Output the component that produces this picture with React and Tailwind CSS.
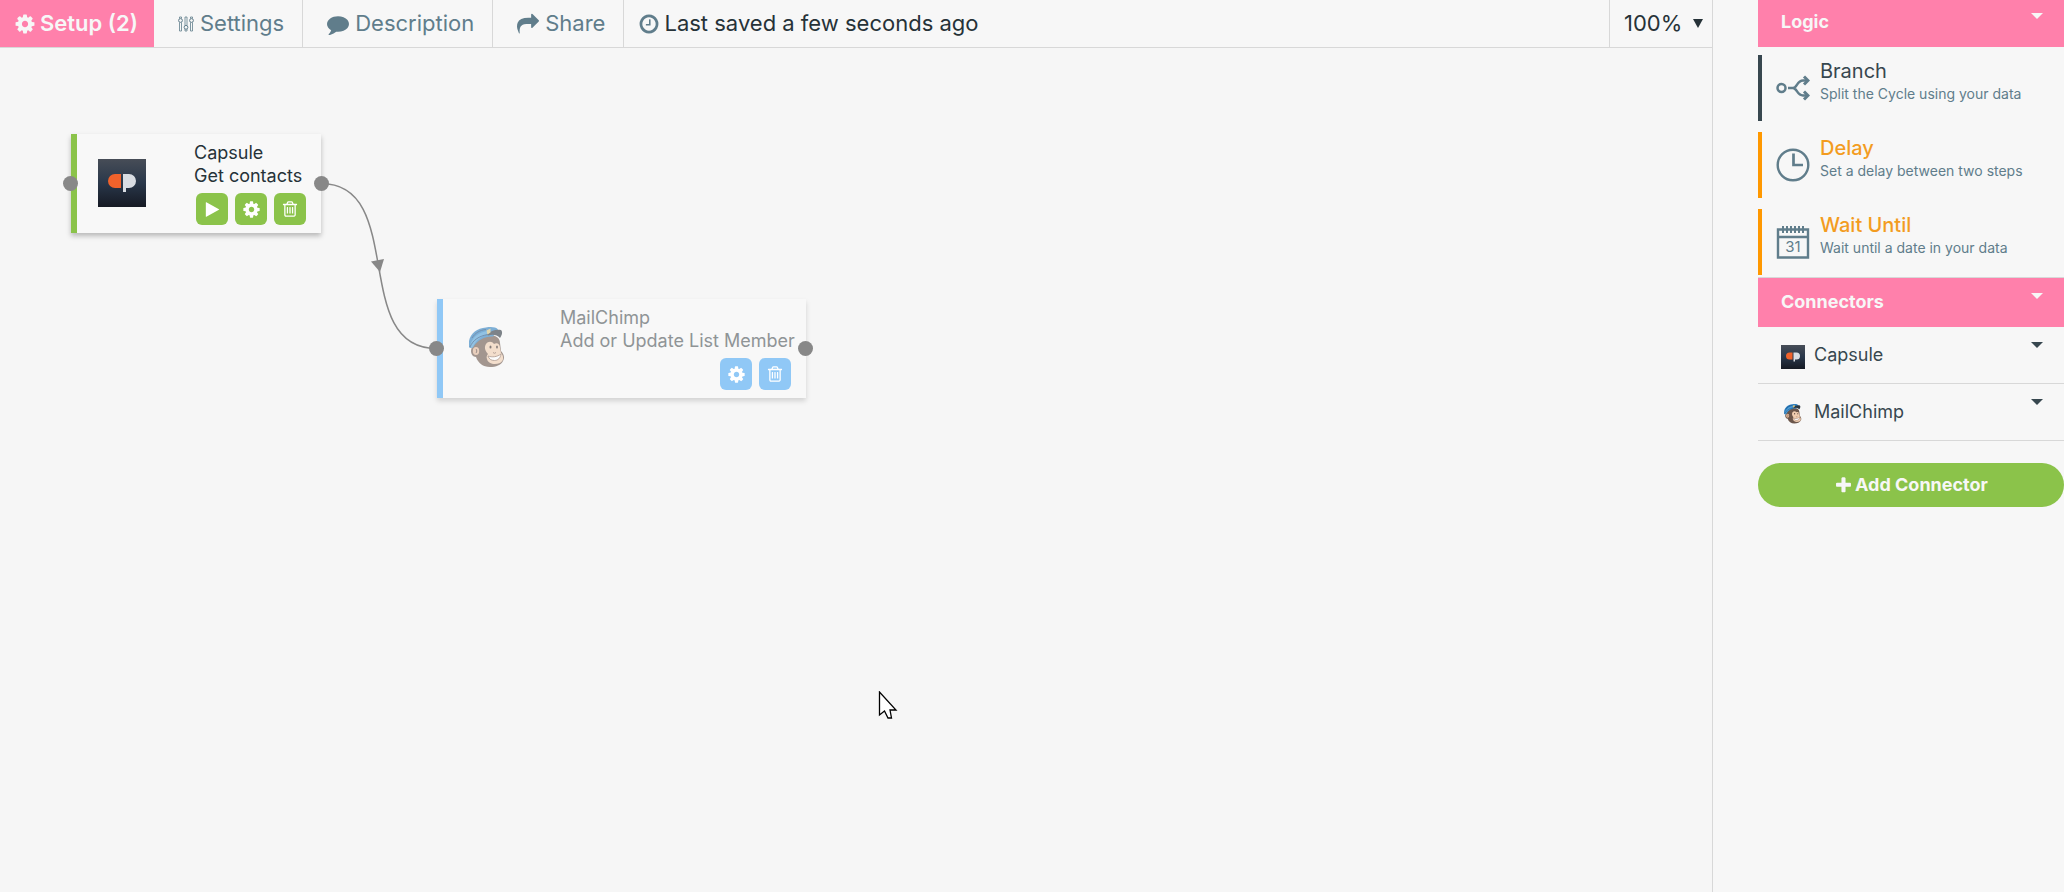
const PATHS = {
  cog: "M1152 896q0-106-75-181t-181-75-181 75-75 181 75 181 181 75 181-75 75-181zm512-109v222q0 12-8 23t-20 13l-185 28q-19 54-39 91 35 50 107 138 10 12 10 25t-9 23q-27 37-99 108t-94 71q-12 0-26-9l-138-108q-44 23-91 38-16 136-29 186-7 28-36 28h-222q-14 0-24.500-8.500t-11.500-21.500l-28-184q-49-16-90-37l-141 107q-10 9-25 9-14 0-25-11-126-114-165-168-7-10-7-23 0-12 8-23 15-21 51-66.500t54-70.500q-27-50-41-99l-183-27q-13-2-21-12.500t-8-23.500v-222q0-12 8-23t19-13l186-28q14-46 39-92-40-57-107-138-10-12-10-24 0-10 9-23 26-36 98.500-107.500t94.500-71.500q13 0 26 10l138 107q44-23 91-38 16-136 29-186 7-28 36-28h222q14 0 24.500 8.500t11.500 21.500l28 184q49 16 90 37l142-107q9-9 24-9 13 0 25 10 129 119 165 170 7 8 7 22 0 12-8 23-15 21-51 66.500t-54 70.500q26 50 41 98l183 28q13 2 21 12.500t8 23.500z",
  trash: "M704 736v576q0 14-9 23t-23 9h-64q-14 0-23-9t-9-23v-576q0-14 9-23t23-9h64q14 0 23 9t9 23zm256 0v576q0 14-9 23t-23 9h-64q-14 0-23-9t-9-23v-576q0-14 9-23t23-9h64q14 0 23 9t9 23zm256 0v576q0 14-9 23t-23 9h-64q-14 0-23-9t-9-23v-576q0-14 9-23t23-9h64q14 0 23 9t9 23zm128 724v-948h-896v948q0 22 7 40.500t14.500 27 10.500 8.500h832q3 0 10.500-8.500t14.500-27 7-40.500zm-672-1076h448l-48-117q-7-9-17-11h-317q-10 2-17 11zm928 32v64q0 14-9 23t-23 9h-96v948q0 83-47 143.500t-113 60.500h-832q-66 0-113-58.500t-47-141.500v-952h-96q-14 0-23-9t-9-23v-64q0-14 9-23t23-9h309l70-167q15-37 54-63t79-26h320q40 0 79 26t54 63l70 167h309q14 0 23 9t9 23z",
  comment: "M1792 896q0 174-120 321.500t-326 233-450 85.500q-70 0-145-8-198 175-460 242-49 14-114 22-17 2-30.500-9t-17.500-29v-1q-3-4-.5-12t2-10 4.500-9.500l6-9 7-8.500 8-9q7-8 31-34.500t34.500-38 31-39.500 32.500-51 27-59 26-76q-157-89-247.500-220t-90.500-281q0-130 71-248.500t191-204.500 286-136.500 348-50.500q244 0 450 85.500t326 233 120 321.500z",
  share: "M1792 640q0 26-19 45l-512 512q-19 19-45 19t-45-19-19-45v-256h-224q-98 0-175.500 6t-154 21.500-133 42.500-105.500 69.500-80 101-48.500 138.500-17.500 181q0 55 5 123 0 6 2.500 23.500t2.500 26.500q0 15-8.500 25t-23.500 10q-16 0-28-17-7-9-13-22t-13.500-30-10.500-24q-127-285-127-451 0-199 53-333 162-403 875-403h224v-256q0-26 19-45t45-19 45 19l512 512q19 19 19 45z",
  clock: "M1024 544v448q0 14-9 23t-23 9h-320q-14 0-23-9t-9-23v-64q0-14 9-23t23-9h224v-352q0-14 9-23t23-9h64q14 0 23 9t9 23zm416 352q0-148-73-273t-198-198-273-73-273 73-198 198-73 273 73 273 198 198 273 73 273-73 198-198 73-273zm224 0q0 209-103 385.500t-279.500 279.500-385.500 103-385.500-103-279.500-279.500-103-385.500 103-385.500 279.500-279.500 385.500-103 385.500 103 279.500 279.500 103 385.500z",
  plus: "M1600 736v192q0 40-28 68t-68 28h-416v416q0 40-28 68t-68 28h-192q-40 0-68-28t-28-68v-416h-416q-40 0-68-28t-28-68v-192q0-40 28-68t68-28h416v-416q0-40 28-68t68-28h192q40 0 68 28t28 68v416h416q40 0 68 28t28 68z",
  play: "M1576 927l-1328 738q-23 13-39.500 3t-16.500-36v-1472q0-26 16.500-36t39.500 3l1328 738q23 13 23 31t-23 31z",
};

function Icon({ name, className }) {
  return (
    <svg viewBox="0 0 1792 1792" fill="currentColor" aria-hidden="true" className={`shrink-0 ${className}`}>
      <path d={PATHS[name]} />
    </svg>
  );
}

function SlidersIcon() {
  return (
    <svg viewBox="0 0 16 18" fill="none" stroke="currentColor" className="h-[18px] w-4 shrink-0" aria-hidden="true">
      <path d="M1.500 7.500v8.500h2V7.500M1.500 3.500V2h2v1.500M7 10.500V2h2v8.500M7 14v2h2v-2M12.500 7.500v8.500h2V7.500M12.500 3.500V2h2v1.500" strokeWidth="0.800" />
      <circle cx="2.500" cy="5.500" r="1.900" />
      <circle cx="8" cy="12.300" r="1.900" />
      <circle cx="13.500" cy="5.500" r="1.900" />
    </svg>
  );
}

function CapsuleLogo({ id, className }) {
  return (
    <svg viewBox="0 0 48 48" className={`shrink-0 ${className}`} aria-hidden="true">
      <defs>
        <linearGradient id={id} x1="0" y1="0" x2="0" y2="1">
          <stop offset="0" stopColor="#474d57" />
          <stop offset="0.500" stopColor="#29374a" />
          <stop offset="1" stopColor="#161a24" />
        </linearGradient>
      </defs>
      <rect width="48" height="48" fill={`url(#${id})`} />
      <path d="M23 15h-6a7 7 0 0 0 0 14h6z" fill="#f0622b" />
      <path d="M25 15h6a7 7 0 0 1 0 14h-3v4h-3z" fill="#d9dde3" />
    </svg>
  );
}

function ChimpLogo({ className }) {
  return (
    <svg viewBox="0 0 36 41" className={`shrink-0 ${className}`} aria-hidden="true">
      <path d="M4 18c2-6 9-10 16-10 7 0 11 3 11 8l1 8c3 3 4 7 2 10-2 4-7 6-13 6-7 0-12-4-14-10-3 0-5-3-5-6 0-2 1-4 2-6z" fill="#6b564b" />
      <ellipse cx="7" cy="24" rx="3.200" ry="4" fill="#e0b596" />
      <path d="M7 22c1 1 1 3 0 4" stroke="#5f4a40" fill="none" />
      <path d="M17 17c2-3 6-3 8 0 3-2 6 0 6 4l1 5c3 3 3 8-1 10-5 2-12 1-13-4-1-2 0-4 1-5-3-3-4-7-2-10z" fill="#f0cdb0" />
      <ellipse cx="21.500" cy="20" rx="1" ry="1.600" fill="#3a2b26" />
      <ellipse cx="28" cy="20" rx="0.900" ry="1.500" fill="#3a2b26" />
      <path d="M24 25.500l1.500.8 1.500-.8" stroke="#8a6a58" fill="none" />
      <path d="M19 29c4 1.500 9 1 13-2-.5 4-3 6.500-6.500 6.500S20 32 19 29z" fill="#fff" stroke="#8a6a58" strokeWidth="0.900" />
      <path d="M0 20C-2 10 6 1 17 0.500c5-1 10-.5 12 2l-5 7C16 9 9 13 5 19c-1 2-4 3-5 1z" fill="#2d7fc0" />
      <path d="M1 19c2-9 9-14 18-15l1 2.500C13 9 7 13 4 20c-1 2-3 1-3-1z" fill="#4f9fd6" />
      <path d="M1 20c3-7 9-11 18-12.500M3 11C6 6 11 3 17 2.500" stroke="#1b4d80" strokeWidth="1" fill="none" />
      <path d="M18 7.500c4-4 9-5.500 14-4.500 2 2 1 5-1 8-3-3-7-4-12-2.500z" fill="#2d3740" />
      <path d="M17.500 3.500l4-2v4l-3 2z" fill="#d8c27a" />
    </svg>
  );
}

function BranchIcon() {
  return (
    <svg viewBox="0 0 34 26" fill="none" stroke="currentColor" strokeWidth="3" className="h-[26px] w-[34px]" aria-hidden="true">
      <circle cx="5.500" cy="13" r="4" strokeWidth="2.500" />
      <path d="M12 13H17C21 13 21 5.500 27 5.500h4M17 13C21 13 21 20.500 27 20.500h4" strokeWidth="2.500" />
      <path d="M28 1.500l4 4-4 4M28 16.500l4 4-4 4" />
    </svg>
  );
}

function DelayIcon() {
  return (
    <svg viewBox="0 0 34 34" fill="none" stroke="currentColor" className="size-[34px]" aria-hidden="true">
      <circle cx="17" cy="17" r="15.300" strokeWidth="2.400" />
      <path d="M17.500 5.500v11.500H27" strokeWidth="2.700" />
    </svg>
  );
}

function CalendarIcon() {
  return (
    <svg viewBox="0 0 34 34" fill="none" stroke="currentColor" className="size-[34px]" aria-hidden="true">
      <path d="M2 4.500h30v28H2zM2 12h30" strokeWidth="2.400" />
      <path d="M7 1v7M11 1v7M15 1v7M19 1v7M23 1v7M27 1v7" strokeWidth="2" />
      <text x="17" y="27" textAnchor="middle" fontSize="15" fill="currentColor" stroke="none">31</text>
    </svg>
  );
}

function Caret({ className }) {
  return (
    <svg viewBox="0 0 12 6" fill="currentColor" className={`h-1.5 w-3 ${className}`} aria-hidden="true">
      <path d="M0 0h12L6 6z" />
    </svg>
  );
}

function Tab({ icon, children }) {
  return (
    <button type="button" className="flex h-full items-center gap-1.5 border-r border-[#d8d8d8] pr-[18px] pl-6 text-[#607d8b]">
      {icon}
      {children}
    </button>
  );
}

function SectionHeader({ children, className }) {
  return (
    <button type="button" className={`flex w-full items-start justify-between bg-[#ff80ab] pr-[21px] pl-[23px] text-left text-lg font-bold text-[#f7f7f7] ${className}`}>
      {children}
      <Caret className="mt-[5px]" />
    </button>
  );
}

function LogicItem({ icon, title, text, bar, titleColor }) {
  return (
    <li className={`flex h-[66px] items-start border-l-4 pl-3.5 ${bar}`}>
      <span className="flex h-[66px] w-[34px] items-center text-[#607d8b]">{icon}</span>
      <div className="pt-0.5 pl-2.5">
        <h3 className={`text-xl leading-7 ${titleColor}`}>{title}</h3>
        <p className="text-sm leading-[18px] whitespace-nowrap text-[#607d8b]">{text}</p>
      </div>
    </li>
  );
}

function ConnectorRow({ logo, name }) {
  return (
    <li className="border-b border-[#d8d8d8]">
      <button type="button" className="flex h-14 w-full items-center pr-[21px] pl-[23px] text-left text-lg text-[#37474f]">
        <span className="mt-1 mr-[9px] flex size-6 items-center justify-center">{logo}</span>
        <span className="flex-1">{name}</span>
        <Caret className="mt-[15px] self-start" />
      </button>
    </li>
  );
}

function Action({ icon, label, color, size }) {
  return (
    <button type="button" aria-label={label} className={`flex size-8 items-center justify-center rounded-md text-white ${color}`}>
      <Icon name={icon} className={size} />
    </button>
  );
}

export default function App() {
  return (
    <div className="flex min-h-screen bg-[#f7f7f7] font-['Inter',sans-serif] text-[#263238]">
      <main className="flex min-w-0 flex-1 flex-col border-r border-[#d8d8d8]">
        <nav className="flex h-12 shrink-0 border-b border-[#d8d8d8] text-[22px] whitespace-nowrap">
          <button type="button" className="flex h-full items-center gap-1 bg-[#ff80ab] pr-4 pl-3.5 font-semibold text-[#f7f7f7]">
            <Icon name="cog" className="size-[22px]" />
            Setup (2)
          </button>
          <Tab icon={<SlidersIcon />}>Settings</Tab>
          <Tab icon={<Icon name="comment" className="size-[22px]" />}>Description</Tab>
          <Tab icon={<Icon name="share" className="size-[22px]" />}>Share</Tab>
          <p className="flex items-center gap-1 pl-3.5">
            <Icon name="clock" className="size-[22px] text-[#607d8b]" />
            Last saved a few seconds ago
          </p>
          <div className="relative ml-auto flex items-center border-l border-[#d8d8d8]">
            <select aria-label="Zoom" defaultValue="100%" className="h-full w-[102px] appearance-none bg-transparent pl-3.5">
              <option>100%</option>
              <option>75%</option>
              <option>50%</option>
            </select>
            <svg viewBox="0 0 10 9" className="pointer-events-none absolute right-[9px] h-[9px] w-2.5" fill="currentColor" aria-hidden="true">
              <path d="M0 0h10L5 9z" />
            </svg>
          </div>
        </nav>

        <section aria-label="Cycle" className="relative flex-1 bg-[#f6f6f6] text-lg leading-[23px]">
          <article className="absolute top-[86px] left-[71px] flex h-[99px] w-[250px] justify-between border-l-6 border-[#8bc34a] bg-[#f8f8f8] pt-[7px] pr-[15px] pl-[21px] shadow-[0_3px_5px_rgba(0,0,0,0.25)]">
            <CapsuleLogo id="capsule-card" className="mt-[18px] size-12" />
            <div className="w-28 whitespace-nowrap">
              <h2>Capsule</h2>
              <p>Get contacts</p>
              <div className="mt-1.5 flex justify-end gap-[7px]">
                <Action icon="play" label="Run" color="bg-[#8bc34a]" size="size-[17px]" />
                <Action icon="cog" label="Settings" color="bg-[#8bc34a]" size="size-[19px]" />
                <Action icon="trash" label="Delete" color="bg-[#8bc34a]" size="size-[18px]" />
              </div>
            </div>
          </article>

          <article className="absolute top-[251px] left-[437px] flex h-[99px] w-[369px] justify-between border-l-6 border-[#90c8f6] bg-[#f8f8f8] pt-[7px] pr-[15px] pl-[26px] shadow-[0_3px_5px_rgba(0,0,0,0.15)]">
            <ChimpLogo className="mt-[21px] h-[41px] w-9 opacity-60" />
            <div className="w-[231px] whitespace-nowrap text-[#8f9496]">
              <h2>MailChimp</h2>
              <p>Add or Update List Member</p>
              <div className="mt-1.5 flex justify-end gap-[7px]">
                <Action icon="cog" label="Settings" color="bg-[#90c8f6]" size="size-[19px]" />
                <Action icon="trash" label="Delete" color="bg-[#90c8f6]" size="size-[18px]" />
              </div>
            </div>
          </article>

          <svg viewBox="0 0 820 360" className="pointer-events-none absolute top-0 left-0 h-[360px] w-[820px]" aria-hidden="true">
            <path d="M321 135.500C407 135.500 350 300.500 436 300.500" fill="none" stroke="#888" strokeWidth="1.500" />
            <path d="M371 213.500l13-2.500-4 13z" fill="#888" />
            <g fill="#888">
              <circle cx="70.500" cy="135.500" r="7.500" />
              <circle cx="321.500" cy="135.500" r="7.500" />
              <circle cx="436.500" cy="300.500" r="7.500" />
              <circle cx="805.500" cy="300.500" r="7.500" />
            </g>
          </svg>

          <svg viewBox="0 0 20 28" className="pointer-events-none absolute top-[643px] left-[878px] h-7 w-5" aria-hidden="true">
            <path d="M1.500 1v23l5-4 3.500 7h3.500l-1.500-8h6z" fill="#fff" stroke="#000" strokeWidth="1.300" />
          </svg>
        </section>
      </main>

      <aside className="w-[351px] shrink-0 pl-[45px]">
        <SectionHeader className="h-[47px] pt-2">Logic</SectionHeader>
        <ul className="flex flex-col gap-[11px] border-b border-[#d8d8d8] pt-2 pb-0.5">
          <LogicItem icon={<BranchIcon />} title="Branch" text="Split the Cycle using your data" bar="border-[#37474f]" titleColor="text-[#37474f]" />
          <LogicItem icon={<DelayIcon />} title="Delay" text="Set a delay between two steps" bar="border-[#ff9800]" titleColor="font-medium text-[#f39c1f]" />
          <LogicItem icon={<CalendarIcon />} title="Wait Until" text="Wait until a date in your data" bar="border-[#ff9800]" titleColor="font-medium text-[#f39c1f]" />
        </ul>
        <SectionHeader className="h-[49px] pt-2.5">Connectors</SectionHeader>
        <ul>
          <ConnectorRow logo={<CapsuleLogo id="capsule-row" className="size-6" />} name="Capsule" />
          <ConnectorRow logo={<ChimpLogo className="h-5 w-[18px]" />} name="MailChimp" />
        </ul>
        <button type="button" className="mt-[22px] flex h-11 w-full items-center justify-center gap-0.5 rounded-full bg-[#8bc34a] text-lg font-bold text-[#f7f7f7]">
          <Icon name="plus" className="size-[19px]" />
          Add Connector
        </button>
      </aside>
    </div>
  );
}
